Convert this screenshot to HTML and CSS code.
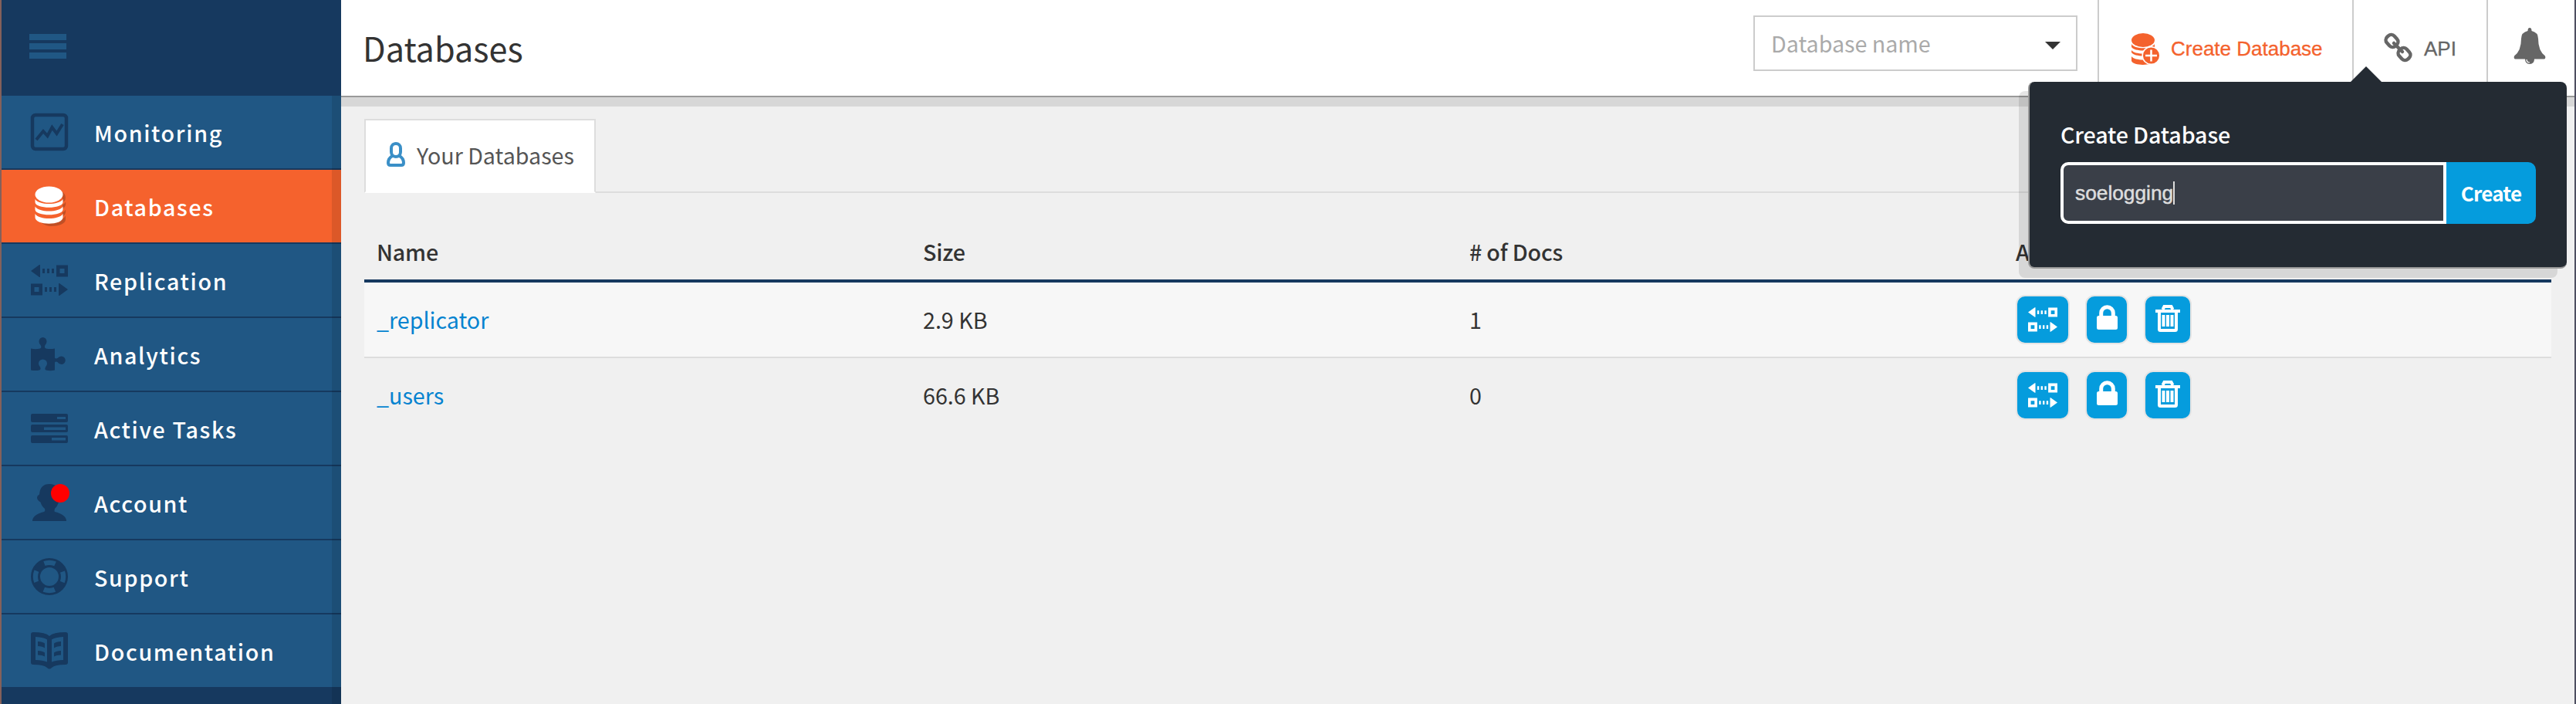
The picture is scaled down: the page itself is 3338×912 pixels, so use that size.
FILE: index.html
```
<!DOCTYPE html>
<html lang="en">
<head>
<meta charset="utf-8">
<title>Databases</title>
<link rel="stylesheet" href="styles.css">
</head>
<body>
<svg class="defs" width="0" height="0">
  <symbol id="repl" viewBox="0 0 48 40">
    <path d="M0 8 L11 0H12V16H11Z M15 5h3v6h-3z M21 5h3v6h-3z M27 5h3v6h-3z M48 32L37 24H36V40H37Z M18 29h3v6h-3z M24 29h3v6h-3z M30 29h3v6h-3z"/>
    <path fill-rule="evenodd" d="M33 0.5H48V15.500H33Z M37.500 5V11H43.500V5Z M0 24.500H15V39.500H0Z M4.500 29V35H10.500V29Z"/>
  </symbol>
  <symbol id="lock" viewBox="0 0 27 32">
    <path d="M5.700 16V10.500a7.800 7.800 0 0 1 15.600 0V16" fill="none" stroke="#fff" stroke-width="5"/>
    <rect x="0" y="14" width="27" height="18" rx="2.500"/>
  </symbol>
  <symbol id="trash" viewBox="0 0 32 35">
    <path d="M5 8V31.500a1.500 1.500 0 0 0 1.500 1.500H25.500a1.500 1.500 0 0 0 1.500-1.500V8M9.500 6L11.500 2H20.500L22.500 6" fill="none" stroke="#fff" stroke-width="4"/>
    <path d="M0 6h32v4H0zM8.500 13h4v15h-4zM14 13h4v15h-4zM19.500 13h4v15h-4z"/>
  </symbol>
</svg>
<div class="app">
  <nav class="sidebar">
    <div class="burger"><i></i><i></i><i></i></div>
    <ul class="menu">
      <li><svg width="48" height="48"><rect x="2" y="2" width="44" height="44" rx="4" fill="none" stroke="#16395f" stroke-width="4.500"/><path d="M7 34L16 23L21.500 29L27.500 18L33.500 26L41 14" fill="none" stroke="#16395f" stroke-width="4"/></svg><span>Monitoring</span></li>
      <li class="on"><svg width="48" height="54" viewBox="0 0 48 54"><g fill="#c14f25"><path d="M41 9q5 3 3.500 10q0 1-3.500 3z M41 25q3-1 4-3.500q1 6-4 9z M41 35q3-1 4-3.500q1 6-4 9z M41 43q3-1 4-3.500v5c0 5-9 8.500-19 8.500q-6 0-12-4l20-2z"/></g><g fill="#fff"><ellipse cx="23.500" cy="12" rx="18" ry="10.500"/><path d="M5.500 18c5 8 31 8 36 0v4c0 9-36 9-36 0z M5.500 27.500c5 8 31 8 36 0v4c0 9-36 9-36 0z M5.500 37c5 8 31 8 36 0v4.500c0 11-36 11-36 0z"/></g></svg><span>Databases</span></li>
      <li><svg width="48" height="40"><use href="#repl"/></svg><span>Replication</span></li>
      <li><svg width="48" height="44" viewBox="0 0 48 44"><path d="M0 14.500q6 1.500 12 0q2.500-1 .500-4.500Q10.500 8 10.500 5.500a5 5.500 0 0 1 10 0q0 2.500-2 4.500q-1.500 3.500 1 4.500q6 1 11.500 0V26.500q1 1.500 3.500 .500q2-2.500 5-2.500a5 5 0 0 1 0 10.500q-3 0-5-3q-2.500-1-3.500 .500V42.500q-6 1.500-11.500 0q-2-1-.500-4q2-2.500 2-4.500a5.500 5.500 0 0 0-11 0q0 2 2 4.500q1.500 3-1 4q-5.500 1-11 0z"/></svg><span>Analytics</span></li>
      <li><svg width="48" height="38" viewBox="0 0 48 38"><path fill-rule="evenodd" d="M2 0H46q2 0 2 2V9q0 2-2 2H2q-2 0-2-2V2q0-2 2-2z M34 4v3h11V4z M2 14H46q2 0 2 2v6q0 2-2 2H2q-2 0-2-2v-6q0-2 2-2z M17 17.500v3.500h28v-3.500z M2 28H46q2 0 2 2v6q0 2-2 2H2q-2 0-2-2v-6q0-2 2-2z M27 31v3.500h18V31z"/></svg><span>Active Tasks</span></li>
      <li><svg width="50" height="48" viewBox="0 0 50 48"><path d="M2 48q0-8 15-12q2-1 1-4q-4-3-5.500-8.500Q8 21 8 17.500Q8 15 11 13.500Q12 0 24 0Q37 0 37 14q0 13-6 18q-1 3 0 4q15 4 15 12z"/><circle cx="38" cy="12" r="12" fill="#f00"/></svg><span>Account</span></li>
      <li><svg width="48" height="48" viewBox="0 0 48 48"><g fill="none" stroke="#16395f"><circle cx="24" cy="24" r="22.600" stroke-width="2.800"/><circle cx="24" cy="24" r="13.500" stroke-width="3"/><circle cx="24" cy="24" r="18" stroke-width="8" stroke-dasharray="14 14.270" stroke-dashoffset="-7.130"/></g></svg><span>Support</span></li>
      <li><svg width="48" height="48" viewBox="0 0 48 48"><path fill-rule="evenodd" d="M3 0Q19 0 24 5Q29 0 45 0q3 0 3 3V39q0 3-3 3Q31 42 27 46q-3 3-6 0Q17 42 3 42q-3 0-3-3V3q0-3 3-3z M6 6V36q9 0 15 2.500V9.500Q17 6.500 6 6z M42 6V36q-9 0-15 2.500V9.500Q31 6.500 42 6z"/><path d="M9 12q6 0 9 2.500v6q-3-2.500-9-2.500z M9 24q6 0 9 2.500v5q-3-2-9-2z M39 12q-6 0-9 2.500v6q3-2.500 9-2.500z M39 24q-6 0-9 2.500v5q3-2 9-2z"/></svg><span>Documentation</span></li>
    </ul>
    <div class="edge"></div>
  </nav>
  <main class="main">
    <header class="top">
      <h1>Databases</h1>
      <div class="picker"><span>Database name</span><svg width="20" height="10"><path d="M0 0H20L10 10z" fill="#333"/></svg></div>
      <div class="act create"><svg width="37" height="41" viewBox="0 0 37 41"><g fill="#f4622d"><ellipse cx="15" cy="9" rx="15" ry="9"/><path d="M0 14c4 7 26 7 30 0v4c-4 6-26 6-30 0z M0 22c4 6 26 6 30 0v3c-4 6-26 6-30 0z M0 30c4 6 26 6 30 0v6c-2 6-27 7-30 0z"/><circle cx="25.500" cy="29" r="11.300" stroke="#fff" stroke-width="1.500"/></g><path d="M25.500 21.500v15M18 29h15" stroke="#fff" stroke-width="2.500"/></svg><span>Create Database</span></div>
      <div class="act api"><svg width="37" height="39" viewBox="0 0 37 39"><g fill="none" stroke="#666" stroke-width="4.500"><rect x="-8" y="-6.500" width="16" height="13" rx="5.500" transform="translate(10.500 11) rotate(48)"/><rect x="-8" y="-6.500" width="16" height="13" rx="5.500" transform="translate(26.500 28) rotate(48)"/><path d="M13 14L24 25" stroke-linecap="round"/></g></svg><span>API</span></div>
      <div class="act bell"><svg width="42" height="47" viewBox="0 0 42 47"><path fill="#666" d="M21 0q2.500 0 2.500 4Q32 6 32 14Q32 30 41 36.500q1 3-1 4H27q0 6.500-6 6.500t-6-6.500H2q-2-1-1-4Q10 30 10 14Q10 6 18.500 4Q18.500 0 21 0z"/><path d="M17 41q0 4 4 4" fill="none" stroke="#fff" stroke-width="1.200"/></svg></div>
    </header>
    <div class="tabs"><div class="tab"><svg width="24" height="32"><g fill="none" stroke="#3a8fc7" stroke-width="4"><rect x="6" y="2" width="12" height="17" rx="6"/><path d="M7.500 18Q2 21 2 27q0 3 3 3H19q3 0 3-3q0-6-5.500-9"/></g></svg><span>Your Databases</span></div></div>
    <section class="table">
      <div class="row head"><span>Name</span><span>Size</span><span># of Docs</span><span>Actions</span></div>
      <div class="row odd"><a>_replicator</a><span>2.9 KB</span><span>1</span><div class="btns"><b class="b1"><svg width="38" height="32"><use href="#repl"/></svg></b><b class="b2"><svg width="27" height="32"><use href="#lock"/></svg></b><b class="b3"><svg width="32" height="35"><use href="#trash"/></svg></b></div></div>
      <div class="row"><a>_users</a><span>66.6 KB</span><span>0</span><div class="btns"><b class="b1"><svg width="38" height="32"><use href="#repl"/></svg></b><b class="b2"><svg width="27" height="32"><use href="#lock"/></svg></b><b class="b3"><svg width="32" height="35"><use href="#trash"/></svg></b></div></div>
    </section>
    <div class="pop">
      <label>Create Database</label>
      <div class="form"><div class="field"><span>soelogging</span><i class="caret"></i></div><button>Create</button></div>
    </div>
  </main>
</div>
</body>
</html>
```
FILE: styles.css
```
* { box-sizing: border-box; margin: 0; padding: 0; }
body { font-family: "Noto Sans CJK SC", "Noto Sans", sans-serif; font-size: 28.65px; color: #333; background: #f0f0f0; overflow: hidden; }
svg { display: block; flex: none; }
.defs { position: absolute; }
.app { position: relative; display: flex; width: 3338px; height: 912px; border-left: 2px solid #84605a; border-right: 2px solid #4e4f61; }
.sidebar { position: relative; width: 440px; background: #16395f; }
.burger { height: 124px; padding: 44px 0 0 36px; display: flex; flex-direction: column; gap: 4px; }
.burger i { width: 48px; height: 8px; background: #205784; }
.menu { list-style: none; }
.menu li { display: flex; align-items: center; height: 96px; padding-left: 38px; border-bottom: 2px solid #16395f; background: #205784; color: #fff; letter-spacing: 1.65px; font-weight: 500; line-height: 94px; }
.menu li.on { background: #f5622d; }
.menu svg { fill: #16395f; margin-right: -48px; overflow: visible; }
.menu span { margin-left: 82px; padding-top: 2px; }
.menu li:nth-child(6) svg { margin-right: -50px; }
.edge { position: absolute; right: 0; top: 124px; bottom: 0; width: 12px; background: rgba(0,0,0,.1); }
.main { position: relative; flex: 1; min-width: 0; }
.top { display: flex; height: 126px; background: #fff; border-bottom: 2px solid #999; box-shadow: 0 12px 0 rgba(0,0,0,.1); padding-left: 28px; }
h1 { flex: 1; font-size: 43.2px; font-weight: 400; line-height: 122px; }
.picker { width: 420px; height: 72px; margin: 20px 26px 0 0; border: 2px solid #ccc; padding: 0 20px 0 21px; display: flex; align-items: center; justify-content: space-between; color: #aaa; line-height: 68px; }
.picker svg { margin-top: 6px; }
.act { height: 124px; border-left: 2px solid #ccc; display: flex; font: 26px/126px "Liberation Sans", Arial, sans-serif; color: #666; }
.create { width: 330px; padding-left: 42px; color: #f4622d; }
.create svg { margin: 43px 14px 0 0; }
.api { width: 174px; padding-left: 39px; }
.api svg { margin: 42px 15px 0 0; }
.act span { -webkit-text-stroke: .3px currentColor; }
.bell { width: 114px; padding-left: 33px; }
.bell svg { margin-top: 36px; }
.tabs { display: flex; margin: 28px 30px 0; border-bottom: 2px solid #ddd; height: 96px; }
.tab { width: 300px; height: 96px; background: #fff; border: 2px solid #ddd; border-bottom-color: #fff; display: flex; padding-left: 27px; color: #555; line-height: 90px; }
.tab svg { margin: 28px 15px 0 0; }
.table { margin: 0 30px; }
.row { display: grid; grid-template-columns: 708px 708px 708px 1fr; height: 98px; line-height: 95px; }
.row > * { padding-left: 16px; }
.row a { color: #0483d0; }
.odd { background: #f7f7f7; border-bottom: 2px solid #ddd; }
.head { height: 116px; border-bottom: 4px solid #16395f; line-height: 152px; font-weight: 500; letter-spacing: -.2px; }
.btns { display: flex; gap: 20px; padding-top: 16px; }
.btns b { display: flex; justify-content: center; height: 64px; border: 2px solid #e4e4e4; border-radius: 12px; background: #059cdd; fill: #fff; }
.b1 { width: 70px; } .b2 { width: 56px; } .b3 { width: 62px; }
.btns .b1 svg { margin-top: 14px; }
.btns .b2 svg, .btns .b3 svg { margin-top: 11px; }
.pop { position: absolute; left: 2186px; top: 106px; width: 698px; height: 242px; background: #242b33; border-left: 2px solid #999; border-bottom: 2px solid #999; border-radius: 8px; box-shadow: -12px 12px 0 rgba(0,0,0,.1); padding: 54px 40px 0; color: #fff; }
.pop::before { content: ""; position: absolute; left: 416px; top: -20px; border: 20px solid transparent; border-top: 0; border-bottom-color: #242b33; }
.pop label { display: block; height: 50px; line-height: 28px; font-weight: 500; letter-spacing: -.15px; }
.form { display: flex; height: 80px; }
.field { width: 500px; border: 4px solid #fff; border-radius: 10px 0 0 10px; background: #3a3f48; display: flex; align-items: center; padding-left: 15px; font: 26.3px/70px "Liberation Sans", Arial, sans-serif; color: #ddd; -webkit-text-stroke: .5px #ddd; }
.caret { width: 2px; height: 30px; background: #ddd; }
button { width: 116px; border: 0; border-radius: 0 10px 10px 0; background: #059cdd; color: #fff; font: 700 26px/80px "Noto Sans CJK SC", sans-serif; letter-spacing: -.8px; }
```
